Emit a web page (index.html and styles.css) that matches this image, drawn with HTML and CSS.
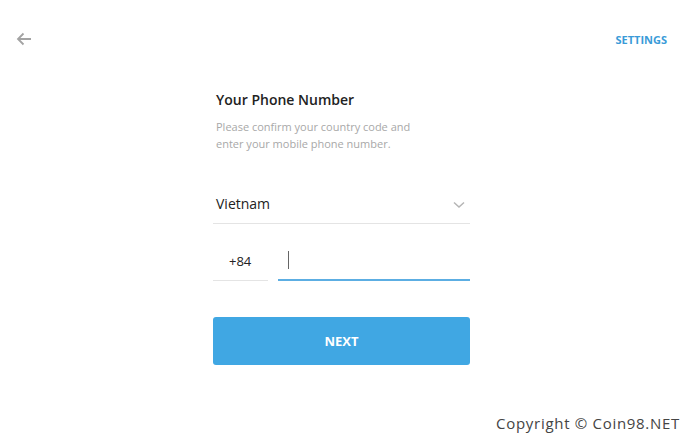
FILE: index.html
```html
<!DOCTYPE html>
<html lang="en">
<head>
    <meta charset="UTF-8">
    <meta name="viewport" content="width=device-width, initial-scale=1.0">
    <title>Telegram</title>
    <link rel="stylesheet" href="styles.css">
</head>
<body>

    <!-- Top bar -->
    <div class="topbar">
        <a class="back" href="#">
            <svg width="16" height="14" viewBox="0 0 16 14">
                <path d="M15 7H2M7.5 1.5L2 7l5.5 5.5" fill="none" stroke="#a3a3a3" stroke-width="1.8"/>
            </svg>
        </a>
        <a class="settings" href="#">SETTINGS</a>
    </div>

    <!-- Login form -->
    <div class="wrap">
        <div class="login">
            <h2>Your Phone Number</h2>
            <p class="hint">Please confirm your country code and<br>enter your mobile phone number.</p>

            <div class="country">
                <span>Vietnam</span>
                <svg width="12" height="8" viewBox="0 0 12 8">
                    <path d="M1 1.5l5 4.5 5-4.5" fill="none" stroke="#b5b5b5" stroke-width="1.5"/>
                </svg>
            </div>

            <div class="phone">
                <div class="code">+84</div>
                <div class="number"><span class="caret"></span></div>
            </div>

            <button class="next">NEXT</button>
        </div>
    </div>

    <div class="copyright">Copyright © Coin98.NET</div>

</body>
</html>
```

FILE: styles.css
```css
body {
    margin: 0;
    height: 437px;
    font-family: "Open Sans", Arial, sans-serif;
    background-color: #fff;
    display: flex;
    flex-direction: column;
}

.topbar {
    display: flex;
    justify-content: space-between;
    align-items: center;
    height: 24px;
    padding: 27px 29px 0 16px;
}

.back {
    display: flex;
}

.settings {
    color: #3a9bd8;
    font-size: 11px;
    font-weight: 700;
    text-decoration: none;
}

.wrap {
    display: flex;
    justify-content: center;
    padding-right: 13px;
}

.login {
    width: 257px;
    margin-top: 39px;
}

.login h2 {
    margin: 0 0 0 3px;
    font-size: 14px;
    font-weight: 600;
    color: #222;
    line-height: 20px;
}

.hint {
    margin: 8px 0 0 3px;
    font-size: 11px;
    line-height: 17px;
    color: #a8a8a8;
}

.country {
    display: flex;
    justify-content: space-between;
    align-items: center;
    margin-top: 34px;
    height: 37px;
    padding: 0 5px 0 3px;
    border-bottom: 1px solid #e4e4e4;
    font-size: 14px;
    color: #222;
}

.country span {
    margin-top: -3px;
}

.phone {
    display: flex;
    gap: 10px;
    margin-top: 19px;
}

.code {
    width: 39px;
    padding-left: 16px;
    height: 37px;
    line-height: 37px;
    font-size: 13px;
    color: #222;
    border-bottom: 1px solid #e4e4e4;
}

.number {
    flex: 1;
    height: 36px;
    display: flex;
    align-items: center;
    padding-left: 10px;
    border-bottom: 2px solid #5caee3;
}

.caret {
    width: 1px;
    height: 18px;
    background-color: #666;
    margin-top: -3px;
}

.next {
    display: block;
    width: 100%;
    height: 48px;
    margin-top: 36px;
    border: none;
    border-radius: 3px;
    background-color: #40a7e3;
    color: #fff;
    font-family: inherit;
    font-size: 13px;
    font-weight: 700;
    cursor: pointer;
}

.copyright {
    margin-top: auto;
    align-self: flex-end;
    padding: 0 16px 4px 0;
    font-family: "Open Sans", sans-serif;
    font-size: 15px;
    letter-spacing: 0.7px;
    color: #444;
    line-height: 20px;
}
```
